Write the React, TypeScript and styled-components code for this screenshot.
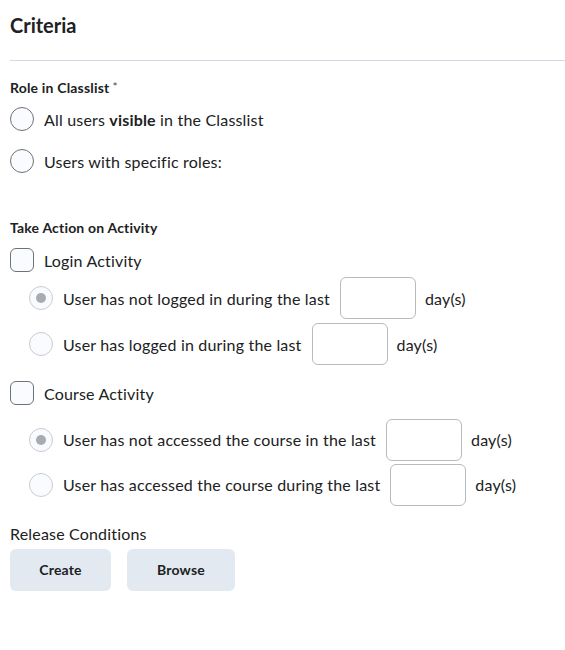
import React from 'react';
import styled, { createGlobalStyle } from 'styled-components';

const GlobalStyle = createGlobalStyle`
  body {
    margin: 0;
    background: #ffffff;
    font-family: Lato, "Open Sans", sans-serif;
    color: #202122;
    letter-spacing: 0.18px;
  }
`;

const Page = styled.div`
  padding: 11px 0 40px 10px;
`;

const Title = styled.h2`
  margin: 0;
  font-size: 20px;
  font-weight: 700;
  line-height: 28px;
  letter-spacing: 0;
  color: #202122;
`;

const Rule = styled.hr`
  border: none;
  border-top: 1px solid #d3d9e3;
  margin: 21px 0 17px;
`;

const SectionLabel = styled.div<{ $top?: number }>`
  font-size: 14px;
  font-weight: 700;
  line-height: 20px;
  color: #202122;
  margin-top: ${p => p.$top ?? 0}px;
`;

const Required = styled.span`
  position: relative;
  top: -2px;
  margin-left: 3px;
  font-size: 12px;
  font-weight: 400;
  line-height: 0;
  color: #494c4e;
`;

const OptionRow = styled.label<{ $indent?: boolean; $height?: number; $top?: number }>`
  display: flex;
  align-items: center;
  gap: 10px;
  height: ${p => p.$height ?? 42}px;
  margin-top: ${p => p.$top ?? 0}px;
  padding-left: ${p => (p.$indent ? 19 : 0)}px;
  font-size: 16px;
  color: #202122;
`;

const Radio = styled.span<{ $disabled?: boolean; $checked?: boolean }>`
  position: relative;
  box-sizing: border-box;
  width: 24px;
  height: 24px;
  flex: none;
  border-radius: 50%;
  border: 1px solid ${p => (p.$disabled ? '#c8ccd0' : '#6e7376')};
  background: #f9fbff;

  &::after {
    content: '';
    display: ${p => (p.$checked ? 'block' : 'none')};
    position: absolute;
    left: 50%;
    top: 50%;
    width: 10px;
    height: 10px;
    margin: -5px 0 0 -5px;
    border-radius: 50%;
    background: #a8acb0;
  }
`;

const Checkbox = styled.span`
  box-sizing: border-box;
  width: 24px;
  height: 24px;
  flex: none;
  border-radius: 6px;
  border: 1px solid #6e7376;
  background: #f9fbff;
`;

const DaysInput = styled.input`
  box-sizing: border-box;
  width: 76px;
  height: 42px;
  border: 1px solid #b5bbc0;
  border-radius: 6px;
  background: #ffffff;
`;

const Unit = styled.span`
  font-size: 16px;
  margin-left: -1px;
`;

const ReleaseLabel = styled.div`
  font-size: 16px;
  line-height: 22px;
  margin-top: 16px;
`;

const ButtonRow = styled.div`
  display: flex;
  gap: 16px;
  margin-top: 4px;
`;

const Button = styled.button<{ $width: number }>`
  width: ${p => p.$width}px;
  height: 42px;
  padding: 0 0 2px;
  border: none;
  border-radius: 6px;
  background: #e3e9f1;
  font-family: Lato, "Open Sans", sans-serif;
  font-size: 14px;
  font-weight: 700;
  letter-spacing: 0.18px;
  color: #202122;
`;

const Bold = styled.b`
  font-weight: 700;
`;

export default function App() {
  return (
    <Page>
      <GlobalStyle />
      <Title>Criteria</Title>
      <Rule />

      <SectionLabel>
        Role in Classlist<Required>*</Required>
      </SectionLabel>
      <OptionRow>
        <Radio />
        <span>
          All users <Bold>visible</Bold> in the Classlist
        </span>
      </OptionRow>
      <OptionRow>
        <Radio />
        <span>Users with specific roles:</span>
      </OptionRow>

      <SectionLabel $top={36}>Take Action on Activity</SectionLabel>
      <OptionRow $height={30} $top={7}>
        <Checkbox />
        <span>Login Activity</span>
      </OptionRow>
      <OptionRow $indent $height={46}>
        <Radio $disabled $checked />
        <span>User has not logged in during the last</span>
        <DaysInput />
        <Unit>day(s)</Unit>
      </OptionRow>
      <OptionRow $indent $height={46}>
        <Radio $disabled />
        <span>User has logged in during the last</span>
        <DaysInput />
        <Unit>day(s)</Unit>
      </OptionRow>

      <OptionRow $height={30} $top={11}>
        <Checkbox />
        <span>Course Activity</span>
      </OptionRow>
      <OptionRow $indent $height={45} $top={9}>
        <Radio $disabled $checked />
        <span>User has not accessed the course in the last</span>
        <DaysInput />
        <Unit>day(s)</Unit>
      </OptionRow>
      <OptionRow $indent $height={45}>
        <Radio $disabled />
        <span>User has accessed the course during the last</span>
        <DaysInput />
        <Unit>day(s)</Unit>
      </OptionRow>

      <ReleaseLabel>Release Conditions</ReleaseLabel>
      <ButtonRow>
        <Button $width={101}>Create</Button>
        <Button $width={108}>Browse</Button>
      </ButtonRow>
    </Page>
  );
}
